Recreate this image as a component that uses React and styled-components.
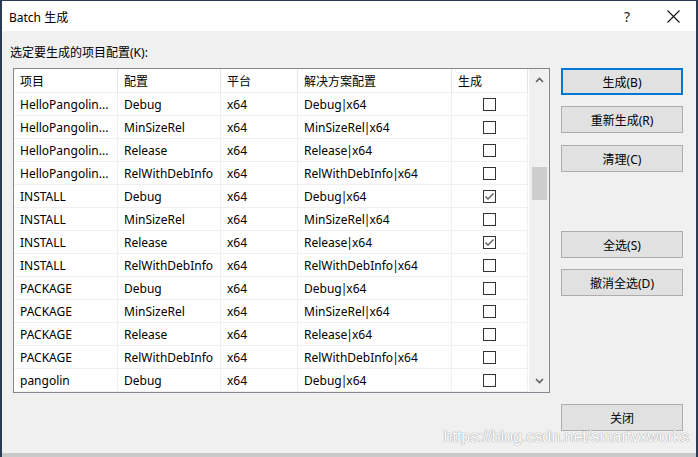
import React from "react";
import styled, { createGlobalStyle } from "styled-components";

const Global = createGlobalStyle`
  html, body {
    margin: 0;
    padding: 0;
    background: #2b3a55;
    width: 698px;
    height: 457px;
    overflow: hidden;
  }
  * { box-sizing: border-box; }
`;

const Frame = styled.div`
  position: relative;
  margin: 1px 2px 0 2px;
  width: 694px;
  height: 456px;
  background: #c9c9c9;
  font-family: "Noto Sans", "Noto Sans CJK SC", sans-serif;
  font-size: 12px;
  color: #000;
`;

const Dialog = styled.div`
  height: 452px;
  background: #f0f0f0;
  display: flex;
  flex-direction: column;
`;

const TitleBar = styled.div`
  height: 30px;
  background: #fff;
  display: flex;
  align-items: center;
  padding-left: 7px;
  padding-top: 1px;
`;

const TitleText = styled.span`
  flex: 1;
  font-size: 12px;
`;

const TitleButton = styled.span`
  width: 46px;
  display: flex;
  justify-content: center;
  font-size: 14px;
  color: #222;
`;

const Body = styled.div`
  flex: 1;
  display: flex;
  padding: 14px 11px 0 11px;
`;

const Left = styled.div`
  display: flex;
  flex-direction: column;
`;

const Label = styled.div`
  margin-left: -3px;
  height: 23px;
  line-height: 16px;
`;

const ListBox = styled.div`
  width: 537px;
  height: 325px;
  border: 1px solid #828790;
  background: #fff;
  display: flex;
  overflow: hidden;
`;

const Table = styled.div`
  flex: 1;
  display: flex;
  flex-direction: column;
`;

const Row = styled.div`
  display: grid;
  grid-template-columns: 104px 103px 77px 154px 76px;
  height: ${(p) => (p.$header ? 24 : 23)}px;
`;

const Cell = styled.div`
  display: flex;
  align-items: center;
  justify-content: ${(p) => (p.$center ? "center" : "flex-start")};
  padding-left: ${(p) => (p.$center ? 0 : 6)}px;
  padding-top: ${(p) => (p.$center ? 0 : 1)}px;
  border-right: 1px solid ${(p) => (p.$header ? "#e5e5e5" : "#f0f0f0")};
  border-bottom: 1px solid #f0f0f0;
  white-space: nowrap;
  overflow: hidden;
`;

const Pipe = styled.span`
  margin: 0 -1px;
`;

const Check = styled.span`
  width: 13px;
  height: 13px;
  border: 1px solid #333;
  background: #fff;
  display: flex;
  align-items: center;
  justify-content: center;
`;

const ScrollBar = styled.div`
  width: 20px;
  background: #f0f0f0;
  display: flex;
  flex-direction: column;
  align-items: center;
  padding-left: 1px;
`;

const Arrow = styled.div`
  height: 22px;
  display: flex;
  align-items: center;
  justify-content: center;
`;

const Track = styled.div`
  flex: 1;
  width: 100%;
  display: flex;
  justify-content: center;
`;

const Thumb = styled.div`
  margin-top: 76px;
  width: 15px;
  height: 33px;
  background: #cdcdcd;
`;

const Side = styled.div`
  margin-left: 11px;
  padding-top: 23px;
  display: flex;
  flex-direction: column;
`;

const Button = styled.div`
  width: 122px;
  height: 27px;
  margin-bottom: ${(p) => p.$gap || 11}px;
  background: #e1e1e1;
  border: ${(p) => (p.$default ? "2px solid #0078d7" : "1px solid #adadad")};
  display: flex;
  align-items: center;
  justify-content: center;
  font-size: 12px;
`;

const Watermark = styled.div`
  position: absolute;
  right: 7px;
  top: 427px;
  font-family: "Liberation Sans", Arial, sans-serif;
  font-size: 16px;
  color: #fff;
  text-shadow: 0 0 1px #9a9a9a, 0 0 1px #9a9a9a;
`;

const rows = [
  ["HelloPangolin...", "Debug", false],
  ["HelloPangolin...", "MinSizeRel", false],
  ["HelloPangolin...", "Release", false],
  ["HelloPangolin...", "RelWithDebInfo", false],
  ["INSTALL", "Debug", true],
  ["INSTALL", "MinSizeRel", false],
  ["INSTALL", "Release", true],
  ["INSTALL", "RelWithDebInfo", false],
  ["PACKAGE", "Debug", false],
  ["PACKAGE", "MinSizeRel", false],
  ["PACKAGE", "Release", false],
  ["PACKAGE", "RelWithDebInfo", false],
  ["pangolin", "Debug", false],
];

const Tick = () => (
  <svg width="11" height="11" viewBox="0 0 11 11">
    <path d="M1.5 5.5 L4 8 L9.5 2.5" fill="none" stroke="#555" strokeWidth="1.3" />
  </svg>
);

const Chevron = ({ down }) => (
  <svg width="9" height="6" viewBox="0 0 9 6">
    <path
      d={down ? "M1 1 L4.5 4.5 L8 1" : "M1 5 L4.5 1.5 L8 5"}
      fill="none"
      stroke="#606060"
      strokeWidth="1.6"
    />
  </svg>
);

const CloseIcon = () => (
  <svg width="13" height="13" viewBox="0 0 13 13">
    <path d="M0.5 0.5 L12.5 12.5 M12.5 0.5 L0.5 12.5" stroke="#111" strokeWidth="1.1" />
  </svg>
);

export default function App() {
  return (
    <>
      <Global />
      <Frame>
        <Dialog>
          <TitleBar>
            <TitleText>Batch 生成</TitleText>
            <TitleButton>?</TitleButton>
            <TitleButton>
              <CloseIcon />
            </TitleButton>
          </TitleBar>
          <Body>
            <Left>
              <Label>选定要生成的项目配置(K):</Label>
              <ListBox>
                <Table>
                  <Row $header>
                    <Cell $header>项目</Cell>
                    <Cell $header>配置</Cell>
                    <Cell $header>平台</Cell>
                    <Cell $header>解决方案配置</Cell>
                    <Cell $header>生成</Cell>
                  </Row>
                  {rows.map(([proj, cfg, on], i) => (
                    <Row key={i}>
                      <Cell>{proj}</Cell>
                      <Cell>{cfg}</Cell>
                      <Cell>x64</Cell>
                      <Cell>
                        {cfg}
                        <Pipe>|</Pipe>x64
                      </Cell>
                      <Cell $center>
                        <Check>{on && <Tick />}</Check>
                      </Cell>
                    </Row>
                  ))}
                </Table>
                <ScrollBar>
                  <Arrow>
                    <Chevron />
                  </Arrow>
                  <Track>
                    <Thumb />
                  </Track>
                  <Arrow>
                    <Chevron down />
                  </Arrow>
                </ScrollBar>
              </ListBox>
            </Left>
            <Side>
              <Button $default $gap={11}>生成(B)</Button>
              <Button $gap={12}>重新生成(R)</Button>
              <Button $gap={59}>清理(C)</Button>
              <Button $gap={11}>全选(S)</Button>
              <Button $gap={108}>撤消全选(D)</Button>
              <Button>关闭</Button>
            </Side>
          </Body>
        </Dialog>
        <Watermark>https://blog.csdn.net/smartvxworks</Watermark>
      </Frame>
    </>
  );
}
